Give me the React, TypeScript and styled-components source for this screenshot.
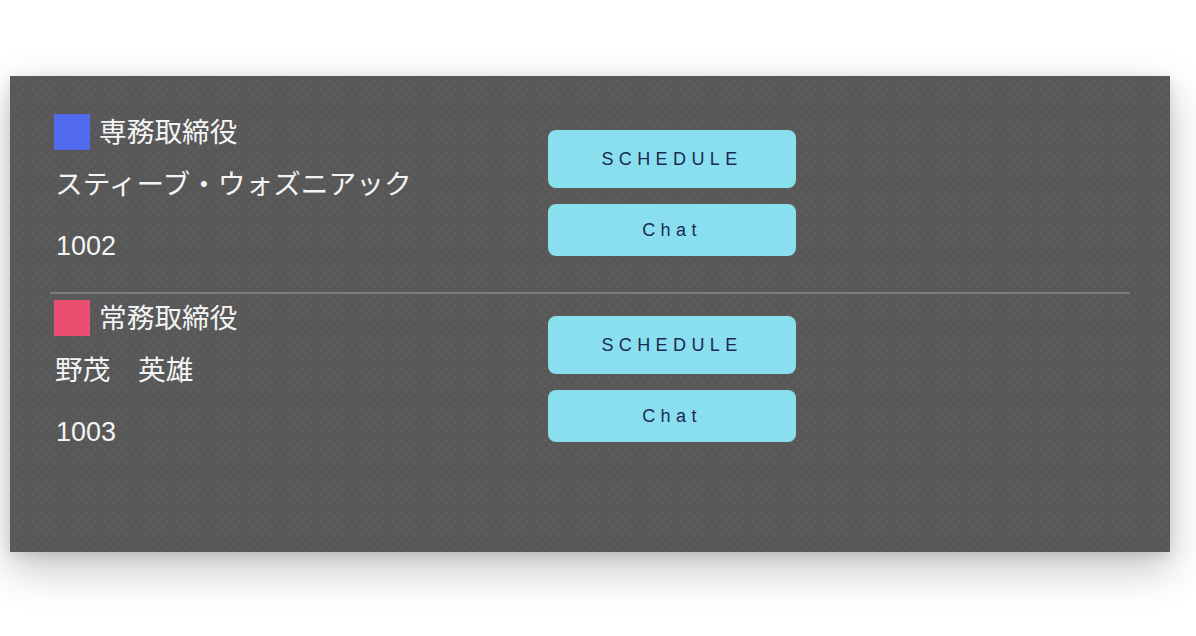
import React from "react";
import styled, { createGlobalStyle } from "styled-components";

const GlobalStyle = createGlobalStyle`
  html, body {
    margin: 0;
    padding: 0;
    background: #ffffff;
  }
  body {
    font-family: "Liberation Sans", "Noto Sans CJK JP", sans-serif;
  }
`;

const Page = styled.div`
  width: 1196px;
  height: 636px;
  padding: 76px 26px 0 10px;
  box-sizing: border-box;
`;

const Panel = styled.div`
  width: 1160px;
  height: 476px;
  box-sizing: border-box;
  padding: 38px 40px 0 40px;
  background-color: #585858;
  background-image:
    radial-gradient(circle, rgba(255, 255, 255, 0.1) 0.7px, transparent 1.1px),
    radial-gradient(circle, rgba(255, 255, 255, 0.1) 0.7px, transparent 1.1px);
  background-size: 9px 9px, 9px 9px;
  background-position: 0 0, 4.5px 4.5px;
  box-shadow: 0 16px 40px rgba(0, 0, 0, 0.24), 0 4px 12px rgba(0, 0, 0, 0.1);
`;

const Row = styled.div<{ $last?: boolean }>`
  display: flex;
  padding-left: 4px;
  height: ${(p) => (p.$last ? "auto" : "178px")};
  border-bottom: ${(p) => (p.$last ? "none" : "2px solid #7c7c7c")};
  margin-bottom: 6px;
`;

const Info = styled.div`
  width: 494px;
  display: flex;
  flex-direction: column;
  color: #f4f4f4;
  font-family: "Liberation Sans", "Noto Sans CJK JP", sans-serif;
`;

const TitleLine = styled.div`
  display: flex;
  align-items: center;
  gap: 9px;
  height: 36px;
`;

const Swatch = styled.span<{ $color: string }>`
  width: 36px;
  height: 36px;
  background: ${(p) => p.$color};
  flex: none;
`;

const Title = styled.span`
  font-size: 27.7px;
  line-height: 36px;
  padding-top: 2px;
`;

const Name = styled.div`
  font-size: 27.7px;
  line-height: 36px;
  margin-top: 17px;
  padding-left: 1px;
`;

const Number = styled.div`
  font-size: 27px;
  line-height: 36px;
  margin-top: 25px;
  padding-left: 2px;
`;

const Actions = styled.div`
  display: flex;
  flex-direction: column;
  gap: 16px;
  margin-top: 16px;
`;

const Button = styled.button<{ $tall?: boolean }>`
  width: 248px;
  height: ${(p) => (p.$tall ? "58px" : "52px")};
  border: none;
  border-radius: 8px;
  background: #8adfef;
  color: #1b2a4f;
  font-family: "Liberation Sans", sans-serif;
  font-size: 18px;
  letter-spacing: 5.4px;
  padding: 0;
  cursor: pointer;
`;

type Person = { title: string; color: string; name: string; ext: string };

const people: Person[] = [
  { title: "専務取締役", color: "#536aee", name: "スティーブ・ウォズニアック", ext: "1002" },
  { title: "常務取締役", color: "#e84f70", name: "野茂　英雄", ext: "1003" },
];

export default function App() {
  return (
    <>
      <GlobalStyle />
      <Page>
        <Panel>
          {people.map((p, i) => (
            <Row key={p.ext} $last={i === people.length - 1}>
              <Info>
                <TitleLine>
                  <Swatch $color={p.color} />
                  <Title>{p.title}</Title>
                </TitleLine>
                <Name>{p.name}</Name>
                <Number>{p.ext}</Number>
              </Info>
              <Actions>
                <Button $tall>SCHEDULE</Button>
                <Button>Chat</Button>
              </Actions>
            </Row>
          ))}
        </Panel>
      </Page>
    </>
  );
}
